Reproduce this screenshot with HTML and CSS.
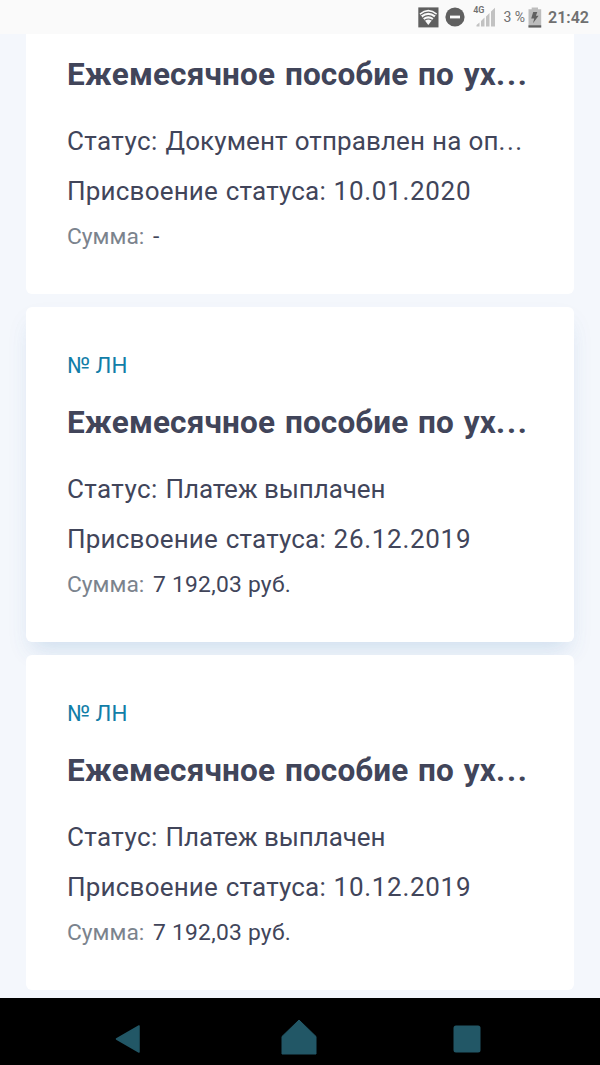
FILE: index.html
```html
<!DOCTYPE html>
<html lang="ru">
<head>
    <meta charset="UTF-8">
    <meta name="viewport" content="width=device-width, initial-scale=1.0">
    <title>Пособия</title>
    <link rel="stylesheet" href="styles.css">
</head>
<body>
    <header class="status-bar">
        <svg class="icon-wifi" width="21" height="21" viewBox="0 0 21 21">
            <rect x="0.3" y="0.4" width="20.2" height="20" fill="#606060"/>
            <path d="M10.3 18 L1.5 6.5 Q10.3 -0.8 19.1 6.5 Z" fill="#fafafa"/>
            <path d="M2.7 8.1 Q10.3 2.2 17.9 8.1 M4.7 10.7 Q10.3 6.6 15.9 10.7 M6.7 13.3 Q10.3 10.7 13.9 13.3" fill="none" stroke="#606060" stroke-width="1.1"/>
        </svg>
        <svg class="icon-dnd" width="20" height="20" viewBox="0 0 20 20">
            <circle cx="10" cy="10" r="9.6" fill="#606060"/>
            <rect x="5" y="8.6" width="10" height="2.8" fill="#fafafa"/>
        </svg>
        <span class="network">4G</span>
        <svg class="icon-signal" width="20" height="20" viewBox="0 0 20 20">
            <path d="M0.5 19.5 V18 L3.5 15.5 V19.5 Z M5 19.5 V14 L8.5 10.5 V19.5 Z M10 19.5 V9.5 L13.5 6 V19.5 Z M15 19.5 V4.5 L19 0.7 V19.5 Z" fill="#c2c2c2"/>
        </svg>
        <span class="percent">3 %</span>
        <svg class="icon-battery" width="14" height="21" viewBox="0 0 14 21">
            <path d="M0.5 20.5 V2.2 H3.7 V0.5 H10 V2.2 H13.2 V20.5 Z" fill="#bdbdbd"/>
            <rect x="0.5" y="18.3" width="12.7" height="2.2" fill="#606060"/>
            <path d="M5.2 5 H9.3 L7.9 8.8 H10.6 L5 16.3 L6.2 11.6 H3.2 Z" fill="#606060"/>
        </svg>
        <span class="clock">21:42</span>
    </header>

    <main class="cards">
        <article class="card card-first">
            <h2 class="title">Ежемесячное пособие по ух<span class="dots">...</span></h2>
            <p class="status">Статус: <span class="state-sent">Документ отправлен на оп<span class="dots">...</span></span></p>
            <p class="date">Присвоение статуса: <span class="day">10.01.2020</span></p>
            <p class="sum"><span class="label">Сумма:</span><span class="value">-</span></p>
        </article>
        <article class="card card-active">
            <div class="number">№ ЛН</div>
            <h2 class="title">Ежемесячное пособие по ух<span class="dots">...</span></h2>
            <p class="status">Статус: <span class="state-paid">Платеж выплачен</span></p>
            <p class="date">Присвоение статуса: <span class="day">26.12.2019</span></p>
            <p class="sum"><span class="label">Сумма:</span><span class="value">7 192,03 руб.</span></p>
        </article>
        <article class="card">
            <div class="number">№ ЛН</div>
            <h2 class="title">Ежемесячное пособие по ух<span class="dots">...</span></h2>
            <p class="status">Статус: <span class="state-paid">Платеж выплачен</span></p>
            <p class="date">Присвоение статуса: <span class="day">10.12.2019</span></p>
            <p class="sum"><span class="label">Сумма:</span><span class="value">7 192,03 руб.</span></p>
        </article>
    </main>

    <nav class="nav-bar">
        <svg width="26" height="30" viewBox="0 0 26 30">
            <path d="M1.5 15 L24 2 V28 Z" fill="#225766" stroke="#225766" stroke-width="1.5" stroke-linejoin="round"/>
        </svg>
        <svg class="icon-home" width="36" height="36" viewBox="0 0 36 36">
            <path d="M18 1 L35 17.5 V35 H1 V17.5 Z" fill="#225766" stroke="#225766" stroke-width="1" stroke-linejoin="round"/>
        </svg>
        <svg width="28" height="28" viewBox="0 0 28 28">
            <rect x="0.5" y="0.5" width="27" height="27" rx="2.5" fill="#225766"/>
        </svg>
    </nav>
</body>
</html>
```
FILE: styles.css
```css
body {
    display: flex;
    flex-direction: column;
    height: 1065px;
    margin: 0;
    font-family: Roboto, "Liberation Sans", sans-serif;
    background-color: #f4f7fc;
    color: #41455a;
    overflow: hidden;
}

.status-bar {
    display: flex;
    align-items: center;
    justify-content: flex-end;
    box-sizing: border-box;
    height: 34px;
    padding-right: 11px;
    background-color: #fafafa;
    color: #707070;
}

.icon-dnd {
    margin-left: 6px;
}

.network {
    align-self: flex-start;
    margin: 5px -8px 0 8px;
    font-size: 9px;
    line-height: 10px;
    font-weight: 600;
}

.percent {
    margin: 0 3px 0 7px;
    font-size: 14px;
}

.clock {
    margin-left: 6px;
    font-size: 16px;
    font-weight: 600;
}

.cards {
    flex: 1;
    display: flex;
    flex-direction: column;
    gap: 13px;
    padding: 0 26px;
}

.card {
    box-sizing: border-box;
    height: 335px;
    padding: 43px 41px 0;
    background-color: #fff;
    border-radius: 6px;
}

.card-first {
    height: 260px;
    padding-top: 21px;
    border-radius: 0 0 6px 6px;
}

.card-active {
    box-shadow: 0 14px 20px -8px rgba(80, 150, 200, 0.18), 0 12px 24px rgba(90, 120, 180, 0.05);
}

.card-first,
.card-active + .card {
    position: relative;
}

.number {
    margin-bottom: 23px;
    font-size: 22.4px;
    line-height: 30px;
    color: #127ea8;
}

.title {
    margin: 0 0 21px;
    font-size: 31.5px;
    line-height: 40px;
    font-weight: 700;
    letter-spacing: 0.15px;
    word-spacing: 1.8px;
    white-space: nowrap;
}

.title .dots {
    letter-spacing: 1.8px;
}

.status,
.date {
    margin: 0;
    font-size: 26px;
    line-height: 50px;
    letter-spacing: 0.2px;
    word-spacing: 1px;
    white-space: nowrap;
}

.status {
    letter-spacing: 0.4px;
    word-spacing: 1px;
}

.state-sent {
    letter-spacing: 0.1px;
    word-spacing: 0.5px;
}

.state-sent .dots {
    letter-spacing: 1.5px;
}

.state-paid {
    letter-spacing: -0.1px;
    word-spacing: 0;
}

.day {
    letter-spacing: 0.7px;
}

.sum {
    display: flex;
    margin: 1px 0 0;
    font-size: 22.8px;
    line-height: 40px;
}

.label {
    width: 86px;
    color: #7b838d;
}

.value {
    letter-spacing: 0.25px;
}

.nav-bar {
    display: flex;
    align-items: center;
    justify-content: space-between;
    box-sizing: border-box;
    height: 67.5px;
    padding: 15px 119px 0 115px;
    background-color: #000;
}

.icon-home {
    margin: 0 -2px 3px 2px;
}
```
